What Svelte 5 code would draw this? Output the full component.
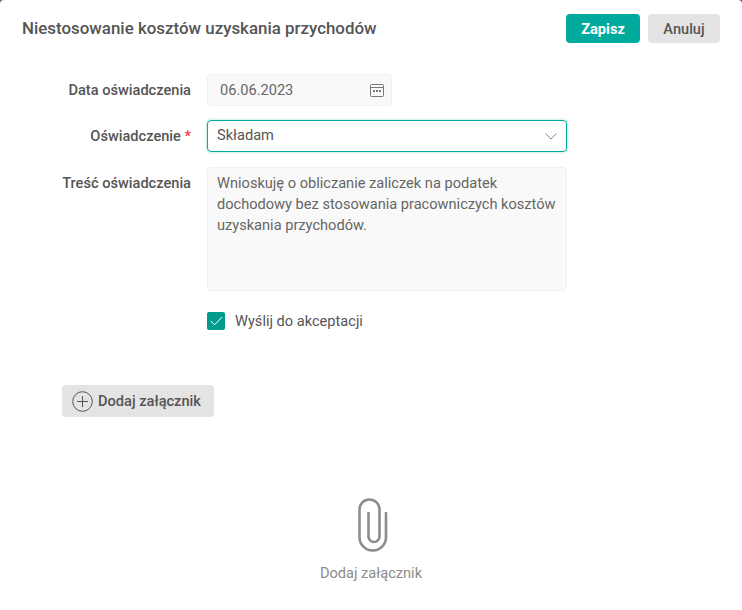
<script>
  let sent = $state(true);
  const body = 'Wnioskuję o obliczanie zaliczek na podatek dochodowy bez stosowania pracowniczych kosztów uzyskania przychodów.';
</script>

<div class="modal">
  <header class="head">
    <h2>Niestosowanie kosztów uzyskania przychodów</h2>
    <div class="actions">
      <button class="btn primary">Zapisz</button>
      <button class="btn">Anuluj</button>
    </div>
  </header>

  <div class="form">
    <div class="row first">
      <span class="label">Data oświadczenia</span>
      <div class="date">
        <span>06.06.2023</span>
        <svg width="16" height="15" viewBox="0 0 16 15" fill="none" stroke="#777" stroke-width="1">
          <rect x="1.5" y="1.5" width="13" height="12" rx="1" />
          <path d="M1.5 4.5h13" />
          <path d="M4 8h2M7 8h2M10 8h2" stroke-width="2" />
        </svg>
      </div>
    </div>
    <div class="row">
      <span class="label">Oświadczenie <em>*</em></span>
      <div class="select">
        <span>Składam</span>
        <svg width="12" height="7" viewBox="0 0 12 7" fill="none" stroke="#888" stroke-width="1">
          <path d="M.5 .5 6 6l5.5-5.5" />
        </svg>
      </div>
    </div>
    <div class="row top">
      <span class="label">Treść oświadczenia</span>
      <div class="area">{body}</div>
    </div>
    <label class="check">
      <input type="checkbox" bind:checked={sent} />
      <span class="box">
        <svg width="13" height="10" viewBox="0 0 13 10" fill="none" stroke="#fff" stroke-width="1">
          <path d="M.8 5 4.5 8.8 12.2 1" />
        </svg>
      </span>
      Wyślij do akceptacji
    </label>
  </div>

  <button class="add">
    <svg width="21" height="21" viewBox="0 0 21 21" fill="none" stroke="#555" stroke-width="1">
      <circle cx="10.5" cy="10.5" r="9.8" />
      <path d="M10.5 5v11M5 10.5h11" />
    </svg>
    Dodaj załącznik
  </button>

  <div class="empty">
    <svg width="30" height="54" viewBox="0 0 30 54" fill="none" stroke="#8c8c8c" stroke-width="2.6" stroke-linecap="round">
      <path d="M28 15v24.250a13.250 13.250 0 0 1-26.500 0V11.500a10 10 0 0 1 20 0V38.500a5.500 5.500 0 0 1-11 0V15" />
    </svg>
    <span>Dodaj załącznik</span>
  </div>
</div>

<style>
  :global(body) {
    margin: 0;
    background: #666;
    font-family: Roboto, "Liberation Sans", sans-serif;
    color: #555;
  }
  .modal {
    box-sizing: border-box;
    height: 610px;
    padding: 14px 22px 0;
    background: #fff;
    border-radius: 4px 4px 0 0;
  }
  .head {
    display: flex;
    justify-content: space-between;
    align-items: center;
    height: 29px;
  }
  h2 {
    margin: -2px 0 0;
    font-size: 16.9px;
    font-weight: 500;
    color: #555;
  }
  .actions {
    display: flex;
    gap: 8px;
  }
  .btn {
    width: 72px;
    height: 29px;
    padding: 0;
    border: 0;
    border-radius: 4px;
    background: #e4e4e4;
    color: #555;
    font: 500 14.6px Roboto, sans-serif;
  }
  .primary {
    width: 74px;
    background: #00aa9d;
    color: #fff;
    font-weight: 700;
  }
  .form {
    margin-top: 31px;
    padding-left: 40px;
    display: flex;
    flex-direction: column;
  }
  .row {
    display: flex;
    align-items: center;
    gap: 16px;
    margin-bottom: 15px;
    font-size: 14.6px;
  }
  .row.first {
    margin-bottom: 14px;
  }
  .row.top {
    align-items: flex-start;
  }
  .row.top .label {
    padding-top: 7px;
  }
  .label {
    width: 129px;
    text-align: right;
    font-weight: 500;
    white-space: nowrap;
  }
  .label em {
    color: #ef4444;
    font-style: normal;
  }
  .date {
    box-sizing: border-box;
    width: 185px;
    height: 32px;
    padding: 0 6px 0 12px;
    display: flex;
    align-items: center;
    justify-content: space-between;
    background: #f9f9f9;
    border: 1px solid #f0f0f0;
    border-radius: 4px;
    color: #666;
  }
  .select {
    box-sizing: border-box;
    width: 360px;
    height: 32px;
    padding: 0 9px;
    display: flex;
    align-items: center;
    justify-content: space-between;
    border: 1px solid #00aa9d;
    border-radius: 4px;
    box-shadow: 0 0 3px rgba(0, 170, 157, .45);
    color: #555;
  }
  .select span {
    margin-top: -2px;
  }
  .area {
    box-sizing: border-box;
    width: 360px;
    height: 124px;
    padding: 5px 9px;
    background: #f9f9f9;
    border: 1px solid #f0f0f0;
    border-radius: 4px;
    line-height: 21px;
    color: #666;
  }
  .check {
    margin: 6px 0 0 145px;
    display: flex;
    align-items: center;
    gap: 10px;
    font-size: 14.6px;
    color: #555;
  }
  .check input {
    display: none;
  }
  .box {
    width: 18px;
    height: 18px;
    display: flex;
    align-items: center;
    justify-content: center;
    background: #009b8c;
    border-radius: 2px;
  }
  .add {
    margin: 55px 0 0 40px;
    height: 32px;
    width: 152px;
    padding: 0 0 0 10px;
    display: flex;
    align-items: center;
    gap: 5px;
    border: 0;
    border-radius: 4px;
    background: #e4e4e4;
    color: #555;
    font: 500 14.6px Roboto, sans-serif;
  }
  .empty {
    margin-top: 81px;
    padding-left: 3px;
    display: flex;
    flex-direction: column;
    align-items: center;
    gap: 12px;
    font-size: 14.6px;
    color: #8c8c8c;
  }
  .empty span {
    margin-left: -3px;
  }
</style>
